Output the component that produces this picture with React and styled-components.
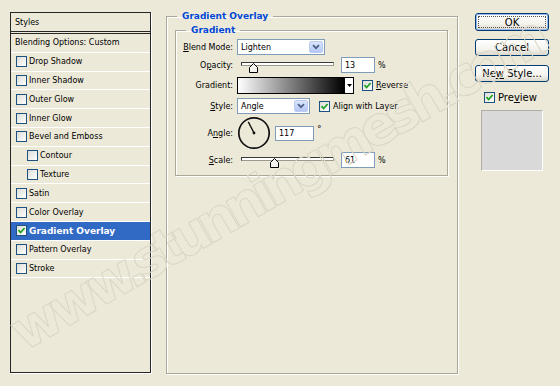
import React from 'react';
import styled, { createGlobalStyle } from 'styled-components';

const GlobalStyle = createGlobalStyle`
  html, body {
    margin: 0;
    padding: 0;
    background: #ece9d8;
  }
  body {
    font-family: "DejaVu Sans", Tahoma, sans-serif;
    font-size: 8px;
    color: #000;
  }
`;

const listItems = [
  { label: 'Drop Shadow' },
  { label: 'Inner Shadow' },
  { label: 'Outer Glow' },
  { label: 'Inner Glow' },
  { label: 'Bevel and Emboss' },
  { label: 'Contour', sub: true },
  { label: 'Texture', sub: true },
  { label: 'Satin' },
  { label: 'Color Overlay' },
  { label: 'Gradient Overlay', checked: true, selected: true },
  { label: 'Pattern Overlay' },
  { label: 'Stroke' },
];

const Check = ({ checked }) => (
  <CheckBox>
    {checked && (
      <svg width="9" height="9" viewBox="0 0 9 9">
        <polyline points="1.5,4.2 3.6,6.5 7.6,2" fill="none" stroke="#21a121" strokeWidth="1.8" />
      </svg>
    )}
  </CheckBox>
);

const Chevron = () => (
  <svg width="8" height="6" viewBox="0 0 8 6">
    <polyline points="1,1.2 4,4.2 7,1.2" fill="none" stroke="#4d6185" strokeWidth="1.8" />
  </svg>
);

const Thumb = () => (
  <svg width="9" height="10" viewBox="0 0 9 10">
    <polygon points="0.5,4.5 4.5,0.5 8.5,4.5 8.5,9.5 0.5,9.5" fill="#f4f3ee" stroke="#000" strokeWidth="1" />
  </svg>
);

const Slider = ({ value, min = 0, max = 100 }) => {
  const pos = ((value - min) / (max - min)) * 93;
  return (
    <SliderBox>
      <Track />
      <ThumbWrap style={{ left: `${pos - 4.5}px` }}>
        <Thumb />
      </ThumbWrap>
    </SliderBox>
  );
};

const Select = ({ width, value }) => (
  <SelectBox $w={width}>
    <span>{value}</span>
    <DropButton>
      <Chevron />
    </DropButton>
  </SelectBox>
);

const Dial = ({ angle }) => {
  const rad = (angle * Math.PI) / 180;
  const x = 17 + 12.5 * Math.cos(rad);
  const y = 17 - 12.5 * Math.sin(rad);
  return (
    <svg width="34" height="34" viewBox="0 0 34 34">
      <circle cx="17" cy="17" r="15.2" fill="none" stroke="#111" strokeWidth="1.7" />
      <line x1="17" y1="17" x2={x} y2={y} stroke="#111" strokeWidth="1.4" />
      <circle cx="17" cy="17" r="1.4" fill="#111" />
    </svg>
  );
};

export default function App() {
  return (
    <>
      <GlobalStyle />
      <Dialog>
        <StylesList>
          <ListHeader>Styles</ListHeader>
          <StyleRow $pad={4}>Blending Options: Custom</StyleRow>
          {listItems.map((it) => (
            <StyleRow key={it.label} $pad={it.sub ? 16 : 5} $selected={it.selected}>
              <Check checked={it.checked} />
              <RowText $selected={it.selected}>{it.label}</RowText>
            </StyleRow>
          ))}
        </StylesList>

        <OuterGroup>
          <Legend $indent={2}>Gradient Overlay</Legend>
          <InnerGroup>
            <Legend $indent={10}>Gradient</Legend>

            <Row $h={16} $mt={4}>
              <Label><u>B</u>lend Mode:</Label>
              <Select width={88} value="Lighten" />
            </Row>

            <Row $h={16} $mt={2}>
              <Label>O<u>p</u>acity:</Label>
              <Spacer $w={4} />
              <Slider value={13} />
              <NumberBox $w={34} $ml={7} $h={16}>13</NumberBox>
              <Unit>%</Unit>
            </Row>

            <Row $h={17} $mt={4}>
              <Label>Gradient:</Label>
              <GradientBar />
              <GradientArrow>
                <svg width="5" height="3" viewBox="0 0 5 3">
                  <polygon points="0,0 5,0 2.5,3" fill="#000" />
                </svg>
              </GradientArrow>
              <Spacer $w={8} />
              <Check checked />
              <CheckText><u>R</u>everse</CheckText>
            </Row>

            <Row $h={16} $mt={4}>
              <Label><u>S</u>tyle:</Label>
              <Select width={73} value="Angle" />
              <Spacer $w={9} />
              <Check checked />
              <CheckText>Align with Layer</CheckText>
            </Row>

            <Row $h={34} $mt={2}>
              <Label>A<u>n</u>gle:</Label>
              <Dial angle={117} />
              <NumberBox $w={39} $ml={4} $h={15}>117</NumberBox>
              <Degree>°</Degree>
            </Row>

            <Row $h={16} $mt={2}>
              <Label><u>S</u>cale:</Label>
              <Spacer $w={4} />
              <Slider value={61} min={10} max={150} />
              <NumberBox $w={34} $ml={7} $h={16}>61</NumberBox>
              <Unit>%</Unit>
            </Row>
          </InnerGroup>
        </OuterGroup>

        <SideColumn>
          <Button $default $h={18} $mt={1}>
            <FocusRing>OK</FocusRing>
          </Button>
          <Button $h={17} $mt={8}>
            <span>Cancel</span>
          </Button>
          <Button $h={17} $mt={9}>
            <span>Ne<u>w</u> Style...</span>
          </Button>
          <PreviewRow>
            <Check checked />
            <PreviewText>Pre<u>v</u>iew</PreviewText>
          </PreviewRow>
          <PreviewSwatch />
        </SideColumn>

        <WatermarkLayer viewBox="0 0 560 386" aria-hidden="true">
          <text
            transform="translate(24 352) rotate(-30)"
            textLength="612"
            fontFamily="DejaVu Sans, sans-serif"
            fontWeight="bold"
            fontSize="54"
            fill="none"
            stroke="#dad6c6"
            strokeWidth="1"
          >
            www.stunningmesh.com
          </text>
        </WatermarkLayer>
      </Dialog>
    </>
  );
}

const Dialog = styled.div`
  position: relative;
  display: flex;
  align-items: flex-start;
  width: 560px;
  height: 386px;
  padding: 12px 0 0 10px;
  box-sizing: border-box;
  overflow: hidden;
`;

const StylesList = styled.div`
  display: flex;
  flex-direction: column;
  width: 141px;
  height: 361px;
  box-sizing: border-box;
  border: 1px solid #262626;
  box-shadow: 1px 1px 0 #fff;
  flex-shrink: 0;
`;

const ListHeader = styled.div`
  display: flex;
  align-items: center;
  height: 21px;
  box-sizing: border-box;
  padding-left: 4px;
  border-bottom: 3px double #262626;
`;

const StyleRow = styled.div`
  display: flex;
  align-items: center;
  height: 18.8px;
  box-sizing: border-box;
  padding-left: ${(p) => p.$pad}px;
  border-bottom: 1px solid #fff;
  background: ${(p) => (p.$selected ? '#316ac5' : 'transparent')};
  flex-shrink: 0;
`;

const RowText = styled.span`
  margin-left: 2px;
  color: ${(p) => (p.$selected ? '#fff' : '#000')};
  font-weight: ${(p) => (p.$selected ? 'bold' : 'normal')};
  font-size: ${(p) => (p.$selected ? '9px' : '8px')};
  white-space: nowrap;
`;

const CheckBox = styled.span`
  display: inline-flex;
  align-items: center;
  justify-content: center;
  width: 11px;
  height: 11px;
  box-sizing: border-box;
  border: 1px solid #1c5180;
  background: linear-gradient(135deg, #dcdcd7, #ffffff);
  flex-shrink: 0;
`;

const OuterGroup = styled.fieldset`
  width: 292px;
  height: 363px;
  box-sizing: border-box;
  margin: -1px 0 0 15px;
  padding: 0 9px 0 8px;
  border: 1px solid #aca899;
  box-shadow: 1px 1px 0 #fff, inset 1px 1px 0 #fff;
  min-width: 0;
  flex-shrink: 0;
`;

const InnerGroup = styled.fieldset`
  margin: 4px 0 0;
  padding: 0 0 7px;
  border: 1px solid #aca899;
  box-shadow: 1px 1px 0 #fff, inset 1px 1px 0 #fff;
  min-width: 0;
`;

const Legend = styled.legend`
  margin-left: ${(p) => p.$indent}px;
  padding: 0 5px;
  font-size: 9px;
  font-weight: bold;
  line-height: 10px;
  color: #0046d5;
`;

const Row = styled.div`
  display: flex;
  align-items: center;
  height: ${(p) => p.$h}px;
  margin-top: ${(p) => p.$mt}px;
`;

const Label = styled.span`
  width: 57px;
  margin-right: 4px;
  text-align: right;
  white-space: nowrap;
  flex-shrink: 0;
`;

const Spacer = styled.span`
  width: ${(p) => p.$w}px;
  flex-shrink: 0;
`;

const SelectBox = styled.div`
  display: flex;
  align-items: center;
  justify-content: space-between;
  width: ${(p) => p.$w}px;
  height: 16px;
  box-sizing: border-box;
  padding: 0 1px 0 3px;
  border: 1px solid #7f9db9;
  background: #fff;
`;

const DropButton = styled.span`
  display: flex;
  align-items: center;
  justify-content: center;
  width: 14px;
  height: 12px;
  box-sizing: border-box;
  border: 1px solid #bccbf0;
  border-radius: 2px;
  background: linear-gradient(#dbe5fd, #b4c7f5);
`;

const SliderBox = styled.div`
  position: relative;
  width: 93px;
  height: 16px;
  flex-shrink: 0;
`;

const Track = styled.div`
  margin-top: 5px;
  height: 4px;
  box-sizing: border-box;
  border: 1px solid #3a3a3a;
  border-bottom-color: #9c9a90;
  border-right-color: #9c9a90;
  background: #fff;
`;

const ThumbWrap = styled.div`
  position: absolute;
  top: 6px;
  height: 10px;
  line-height: 0;
`;

const NumberBox = styled.div`
  display: flex;
  align-items: center;
  width: ${(p) => p.$w}px;
  height: ${(p) => p.$h}px;
  margin-left: ${(p) => p.$ml}px;
  box-sizing: border-box;
  padding-left: 3px;
  border: 1px solid #7f9db9;
  background: #fff;
  flex-shrink: 0;
`;

const Unit = styled.span`
  margin-left: 3px;
`;

const Degree = styled.span`
  align-self: flex-start;
  margin: 8px 0 0 3px;
  font-size: 9px;
`;

const GradientBar = styled.div`
  width: 108px;
  height: 17px;
  box-sizing: border-box;
  border: 1px solid #000;
  background: linear-gradient(to right, #ffffff, #000000);
  flex-shrink: 0;
`;

const GradientArrow = styled.div`
  display: flex;
  align-items: center;
  justify-content: center;
  width: 9px;
  height: 17px;
  box-sizing: border-box;
  border: 1px solid #000;
  border-left: none;
  background: #fff;
  flex-shrink: 0;
`;

const CheckText = styled.span`
  margin-left: 3px;
  white-space: nowrap;
`;

const SideColumn = styled.div`
  display: flex;
  flex-direction: column;
  width: 74px;
  margin-left: 17px;
  font-size: 10px;
  flex-shrink: 0;
`;

const Button = styled.div`
  display: flex;
  align-items: center;
  justify-content: center;
  height: ${(p) => p.$h}px;
  margin-top: ${(p) => p.$mt}px;
  box-sizing: border-box;
  padding: ${(p) => (p.$default ? '2px' : '0')};
  border: 1px solid #003c74;
  border-radius: 3px;
  background: linear-gradient(#ffffff 0%, #f4f3ee 60%, #dcd8cc 100%);
  box-shadow: ${(p) => (p.$default ? 'inset 0 0 0 1px #98b8ea' : 'none')};
  white-space: nowrap;
`;

const FocusRing = styled.span`
  display: flex;
  align-items: center;
  justify-content: center;
  width: 100%;
  height: 100%;
  box-sizing: border-box;
  border: 1px dotted #555;
`;

const PreviewRow = styled.div`
  display: flex;
  align-items: center;
  height: 13px;
  margin: 9px 0 0 9px;
`;

const PreviewText = styled.span`
  margin-left: 3px;
`;

const PreviewSwatch = styled.div`
  width: 62px;
  height: 61px;
  margin: 6px 0 0 6px;
  box-sizing: border-box;
  border: 1px solid;
  border-color: #b0aea6 #ffffff #ffffff #b0aea6;
  background: #d9d9d9;
`;

const WatermarkLayer = styled.svg`
  position: absolute;
  top: 0;
  left: 0;
  width: 560px;
  height: 386px;
  pointer-events: none;
`;
